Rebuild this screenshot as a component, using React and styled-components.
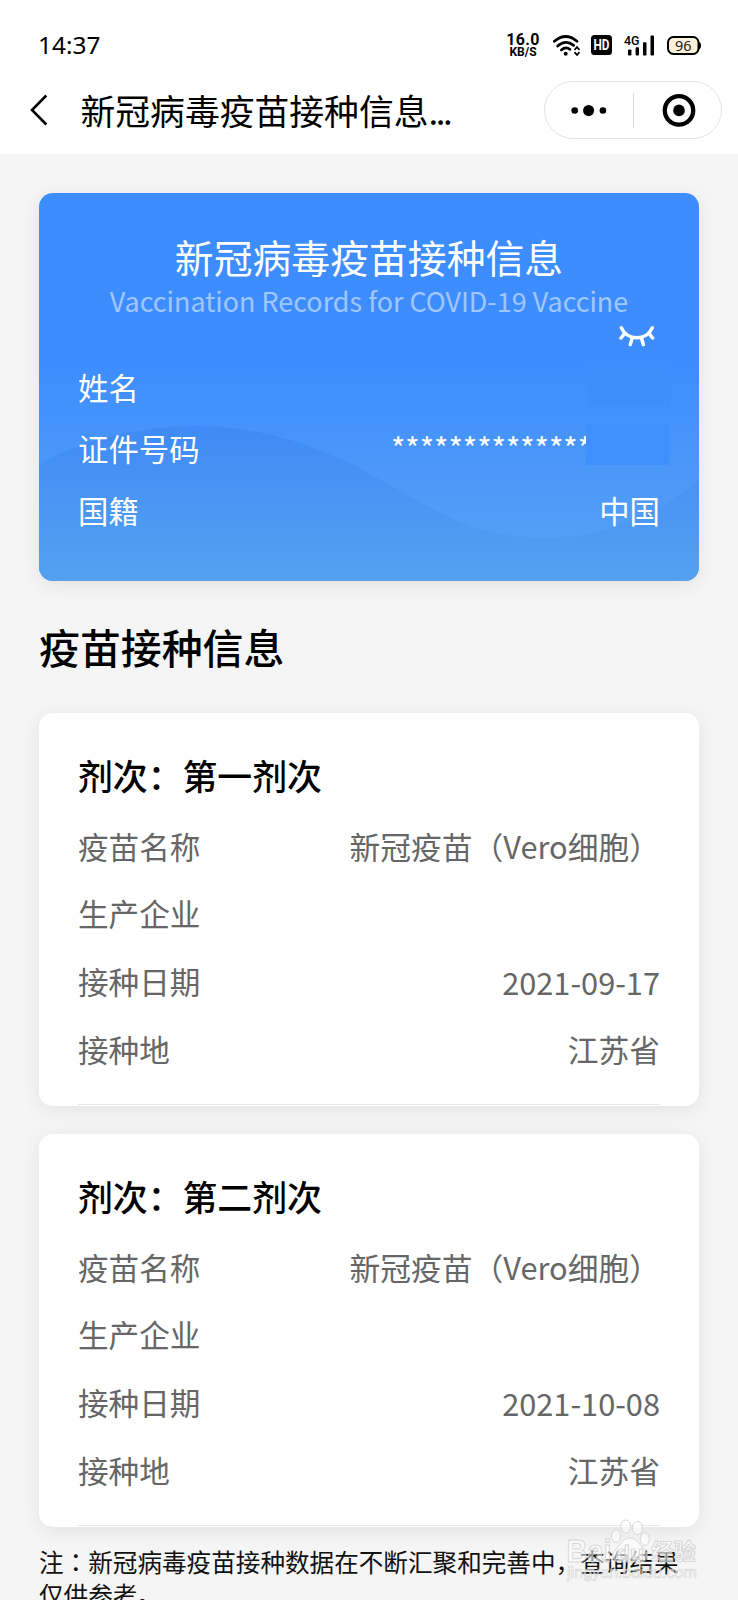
import React from "react";
import styled, { createGlobalStyle } from "styled-components";

const GlobalStyle = createGlobalStyle`
  * { box-sizing: border-box; }
  body {
    margin: 0;
    background: #f5f5f5;
    font-family: "Noto Sans CJK SC", sans-serif;
    color: #000;
  }
`;

const Page = styled.div`
  position: relative;
  width: 738px;
  height: 1600px;
  overflow: hidden;
  background: #f5f5f5;
`;

const Header = styled.header`
  height: 154px;
  background: #fff;
`;

const StatusBar = styled.div`
  display: flex;
  align-items: center;
  justify-content: space-between;
  height: 64px;
  padding: 26px 37px 0 38px;
`;

const Clock = styled.span`
  font: 400 24.4px/38px "Noto Sans", sans-serif;
`;

const StatusIcons = styled.div`
  display: flex;
  align-items: center;
  height: 38px;
`;

const NetSpeed = styled.div`
  display: flex;
  flex-direction: column;
  align-items: center;
  width: 34px;
  margin-right: 13px;
  font-family: Roboto, sans-serif;
  font-weight: 700;
`;

const SpeedValue = styled.span`
  font-size: 16px;
  line-height: 13px;
  letter-spacing: 0.3px;
`;

const SpeedUnit = styled.span`
  font-size: 12px;
  line-height: 12px;
`;

const StatusIcon = styled.svg`
  display: block;
  flex: none;
  margin-right: ${(p) => p.$gap || 0}px;
`;

const NavBar = styled.div`
  display: flex;
  align-items: center;
  height: 90px;
  padding: 2px 16.5px 0 29px;
`;

const NavTitle = styled.h1`
  flex: 1;
  margin: 0 0 0 31.5px;
  font-size: 34.8px;
  font-weight: 400;
  line-height: 50px;
  white-space: nowrap;
`;

const Dots = styled.span`
  letter-spacing: -2.4px;
`;

const Capsule = styled.div`
  display: flex;
  align-items: center;
  width: 178px;
  height: 58px;
  border: 1px solid #e4e4e4;
  border-radius: 29px;
`;

const CapsuleButton = styled.button`
  display: flex;
  flex: none;
  width: ${(p) => p.$width}px;
  align-items: center;
  justify-content: center;
  height: 100%;
  padding: 0 0 0 ${(p) => p.$inset || 0}px;
  border: 0;
  background: none;
`;

const CapsuleDivider = styled.i`
  width: 1px;
  height: 35px;
  background: #dedede;
`;

const Content = styled.main`
  padding: 39px 39px 0;
`;

const IdentityCard = styled.section`
  position: relative;
  height: 388px;
  padding: 35.5px 39px 0;
  border-radius: 14px;
  overflow: hidden;
  color: #fff;
  background: linear-gradient(#3d8dff 0, #3d8dff 170px, #549ff5 350px);
`;

const CardShadow = styled.div`
  border-radius: 14px;
  box-shadow: 0 4px 20px rgba(0, 0, 0, 0.08);
`;

const Wave = styled.svg`
  position: absolute;
  left: 0;
  top: 0;
`;

const CardBody = styled.div`
  position: relative;
`;

const CardTitle = styled.h2`
  margin: 0;
  text-align: center;
  font-size: 38.85px;
  font-weight: 400;
  line-height: 54px;
`;

const CardSubtitle = styled.p`
  margin: 0;
  text-align: center;
  font-size: 26.95px;
  line-height: 35px;
  white-space: nowrap;
  color: rgba(255, 255, 255, 0.52);
`;

const EyeRow = styled.div`
  display: flex;
  justify-content: flex-end;
  height: 38.5px;
  padding: 7px 5px 0 0;
`;

const IdentityRow = styled.div`
  position: relative;
  display: flex;
  align-items: center;
  justify-content: space-between;
  height: 61.5px;
  font-size: 30.4px;
`;

const MaskedNumber = styled.span`
  width: 269px;
  padding-bottom: 3px;
  font-size: 30.75px;
  white-space: nowrap;
`;

const Cover = styled.span`
  position: absolute;
  left: ${(p) => p.$left}px;
  top: ${(p) => p.$top}px;
  width: ${(p) => p.$width}px;
  height: 42px;
  background: ${(p) => p.$color};
`;

const SectionTitle = styled.h2`
  margin: 36px 0;
  font-size: 40.9px;
  font-weight: 500;
  line-height: 60px;
`;

const DoseCard = styled.section`
  display: flex;
  flex-direction: column;
  height: 393px;
  margin-bottom: 28px;
  padding: 25px 39px 1px;
  border-radius: 14px;
  background: #fff;
  box-shadow: 0 4px 20px rgba(0, 0, 0, 0.08);
`;

const DoseTitle = styled.h3`
  margin: 0;
  font-size: 34.85px;
  font-weight: 500;
  line-height: 74px;
`;

const DoseRow = styled.div`
  display: flex;
  align-items: center;
  justify-content: space-between;
  height: 67.65px;
  font-size: 30.6px;
  color: #666;
`;

const DoseValue = styled.span`
  font-size: 30.75px;
`;

const DoseDivider = styled.hr`
  width: 100%;
  height: 1px;
  margin: auto 0 0;
  border: 0;
  background: #e8e8e8;
`;

const Note = styled.p`
  margin: -10px 0 0;
  font-size: 24.6px;
  line-height: 32.8px;
  color: #111;
`;

const CenteredColon = styled.span`
  font-family: "Noto Sans CJK TC", sans-serif;
`;

const Watermark = styled.svg`
  position: absolute;
  left: 560px;
  top: 1516px;
`;

const doses = [
  {
    title: "剂次：第一剂次",
    rows: [
      ["疫苗名称", "新冠疫苗（Vero细胞）"],
      ["生产企业", ""],
      ["接种日期", "2021-09-17"],
      ["接种地", "江苏省"],
    ],
  },
  {
    title: "剂次：第二剂次",
    rows: [
      ["疫苗名称", "新冠疫苗（Vero细胞）"],
      ["生产企业", ""],
      ["接种日期", "2021-10-08"],
      ["接种地", "江苏省"],
    ],
  },
];

const WifiIcon = () => (
  <StatusIcon $gap={11} width="27" height="21" viewBox="220 74 81 63" fill="none" stroke="#000" strokeWidth="8" strokeLinecap="round">
    <path d="M224 93Q258 64 292 93" />
    <path d="M234 107Q258 86 282 105" />
    <path d="M245 119Q258 108 271 117" />
    <circle cx="258" cy="130" r="6" fill="#000" stroke="none" />
    <path d="M286 117L292 110L298 117M286 127L292 134L298 127" strokeWidth="5" />
  </StatusIcon>
);

const HdIcon = () => (
  <StatusIcon $gap={12} width="21" height="20" viewBox="0 0 21 20">
    <rect width="21" height="20" rx="3.5" />
    <text x="10.5" y="15.2" fill="#fff" textAnchor="middle" textLength="16" lengthAdjust="spacingAndGlyphs" fontFamily="Roboto, sans-serif" fontWeight="700" fontSize="14.5">HD</text>
  </StatusIcon>
);

const SignalIcon = () => (
  <StatusIcon $gap={13} width="30" height="21" viewBox="0 0 30 21">
    <text x="0" y="10.2" textLength="15.5" lengthAdjust="spacingAndGlyphs" fontFamily="Roboto, sans-serif" fontWeight="500" fontSize="13">4G</text>
    <rect x="4" y="14.5" width="3.4" height="6.1" rx="0.8" />
    <rect x="11.6" y="12.2" width="3.4" height="8.4" rx="0.8" />
    <rect x="19" y="7.2" width="3.5" height="13.4" rx="0.8" />
    <rect x="26.5" y="0.6" width="3.5" height="20" rx="0.8" />
  </StatusIcon>
);

const BatteryIcon = () => (
  <StatusIcon width="34" height="19" viewBox="0 0 34 19">
    <rect x="1" y="1" width="30.5" height="17" rx="5.5" fill="#fdf1da" stroke="#000" strokeWidth="2" />
    <path d="M31.5 5.5Q34 6 34 9.5T31.5 13.5Z" />
    <text x="16.2" y="14.5" textAnchor="middle" textLength="16.5" lengthAdjust="spacingAndGlyphs" fontFamily='"Noto Sans", sans-serif' fontSize="14.8" fill="#222">96</text>
  </StatusIcon>
);

const ClosedEyeIcon = () => (
  <svg width="36" height="22" viewBox="0 0 36 22" fill="none" stroke="#fff" strokeWidth="3.5" strokeLinecap="round">
    <path d="M2.3 2.8C8.5 16.2 27.5 16.2 33.3 2.8" />
    <path d="M5.6 8.6L2 13M30 8.6L33.6 13M13.1 13.2L11.3 19.6M22.5 13.2L24.3 19.6" />
  </svg>
);

const BaiduWatermark = () => (
  <Watermark width="150" height="74" viewBox="0 0 150 74">
    <g fill="#fff" fillOpacity="0.55" stroke="#cccccc" strokeOpacity="0.75" strokeWidth="1">
      <ellipse cx="65.7" cy="10.5" rx="5" ry="6.5" />
      <ellipse cx="77.5" cy="12" rx="5.2" ry="6.5" />
      <ellipse cx="56" cy="20" rx="4.6" ry="6.3" />
      <ellipse cx="84.8" cy="23" rx="4.6" ry="6.3" />
      <path d="M70 22C63 22 62 27 57 32C50 38 52 46 60 46C66 46 74 46 80 46C88 46 90 38 83 32C78 27 77 22 70 22Z" />
      <text x="6.5" y="45.5" textLength="45" lengthAdjust="spacingAndGlyphs" fontFamily='"Liberation Sans", sans-serif' fontWeight="700" fontSize="31">Bai</text>
      <text x="56" y="44" textLength="28" lengthAdjust="spacingAndGlyphs" fontFamily='"Liberation Sans", sans-serif' fontWeight="700" fontSize="20">du</text>
      <text x="91" y="43.5" textLength="45" lengthAdjust="spacingAndGlyphs" fontFamily='"Noto Sans CJK SC", sans-serif' fontWeight="700" fontSize="23">经验</text>
      <text x="7" y="61.5" textLength="130" lengthAdjust="spacingAndGlyphs" fontFamily='"Liberation Sans", sans-serif' fontSize="16" strokeWidth="0.7">jingyan.baidu.com</text>
    </g>
  </Watermark>
);

export default function App() {
  return (
    <Page>
      <GlobalStyle />
      <Header>
        <StatusBar>
          <Clock>14:37</Clock>
          <StatusIcons>
            <NetSpeed>
              <SpeedValue>16.0</SpeedValue>
              <SpeedUnit>KB/S</SpeedUnit>
            </NetSpeed>
            <WifiIcon />
            <HdIcon />
            <SignalIcon />
            <BatteryIcon />
          </StatusIcons>
        </StatusBar>
        <NavBar>
          <svg width="20" height="32" viewBox="0 0 20 32" fill="none" stroke="#000" strokeWidth="2.6">
            <path d="M17.3 1.5L3 16L17.3 30.5" />
          </svg>
          <NavTitle>
            新冠病毒疫苗接种信息<Dots>...</Dots>
          </NavTitle>
          <Capsule>
            <CapsuleButton aria-label="更多" $width={88}>
              <svg width="36" height="12" viewBox="0 0 36 12">
                <circle cx="3.7" cy="6.5" r="3.3" />
                <circle cx="17.6" cy="6.5" r="5.5" />
                <circle cx="31.9" cy="6.5" r="3.3" />
              </svg>
            </CapsuleButton>
            <CapsuleDivider />
            <CapsuleButton aria-label="关闭" $width={87} $inset={4}>
              <svg width="34" height="34" viewBox="0 0 34 34">
                <circle cx="17" cy="17.4" r="14.2" fill="none" stroke="#000" strokeWidth="4.3" />
                <circle cx="17" cy="17.4" r="5.8" />
              </svg>
            </CapsuleButton>
          </Capsule>
        </NavBar>
      </Header>

      <Content>
        <CardShadow>
          <IdentityCard>
            <Wave width="660" height="388" viewBox="0 0 660 388">
              <defs>
                <linearGradient id="wave" gradientUnits="userSpaceOnUse" x1="0" y1="233" x2="0" y2="388">
                  <stop offset="0" stopColor="#3f8bf6" />
                  <stop offset="1" stopColor="#54a1f0" />
                </linearGradient>
              </defs>
              <path d="M0 271C50 244 105 233 158 233C226 233 287 255 344 288C397 319 442 345 504 345C562 345 612 325 660 287V388H0Z" fill="url(#wave)" />
            </Wave>
            <CardBody>
              <CardTitle>新冠病毒疫苗接种信息</CardTitle>
              <CardSubtitle>Vaccination Records for COVID-19 Vaccine</CardSubtitle>
              <EyeRow>
                <ClosedEyeIcon />
              </EyeRow>
              <IdentityRow>
                <span>姓名</span>
                <Cover $left={509} $top={8.5} $width={84} $color="#3e8efe" />
              </IdentityRow>
              <IdentityRow>
                <span>证件号码</span>
                <MaskedNumber>**************</MaskedNumber>
                <Cover $left={508} $top={5.5} $width={83} $color="#3f8fff" />
              </IdentityRow>
              <IdentityRow>
                <span>国籍</span>
                <span>中国</span>
              </IdentityRow>
            </CardBody>
          </IdentityCard>
        </CardShadow>

        <SectionTitle>疫苗接种信息</SectionTitle>

        {doses.map((dose) => (
          <DoseCard key={dose.title}>
            <DoseTitle>{dose.title}</DoseTitle>
            {dose.rows.map(([label, value]) => (
              <DoseRow key={label}>
                <span>{label}</span>
                <DoseValue>{value}</DoseValue>
              </DoseRow>
            ))}
            <DoseDivider />
          </DoseCard>
        ))}

        <Note>
          注<CenteredColon>：</CenteredColon>新冠病毒疫苗接种数据在不断汇聚和完善中，查询结果仅供参考。
        </Note>
      </Content>
      <BaiduWatermark />
    </Page>
  );
}
